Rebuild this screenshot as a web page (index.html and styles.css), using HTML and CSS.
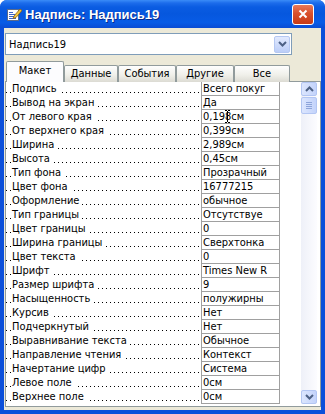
FILE: index.html
```html
<!DOCTYPE html>
<html lang="ru">
<head>
<meta charset="UTF-8">
<title>Надпись: Надпись19</title>
<link rel="stylesheet" href="styles.css">
</head>
<body>

<div class="window">
    <div class="titlebar">
        <svg class="app-icon" viewBox="0 0 16 16">
            <rect x="1.5" y="3.5" width="11" height="11" fill="#fff" stroke="#5A6B8C"/>
            <path d="M3 6.5h4M3 8.5h6M3 10.5h5M3 12.5h7" stroke="#3C64C8"/>
            <path d="M8 10l6-7 2 1.5-6 7-3 1z" fill="#F3C63F" stroke="#8A6010" stroke-width=".8"/>
        </svg>
        <span class="title">Надпись: Надпись19</span>
        <div class="close">
            <svg viewBox="0 0 10 10"><path d="M1.5 1.5l7 7M8.5 1.5l-7 7" stroke="#fff" stroke-width="2"/></svg>
        </div>
    </div>

    <div class="client">
        <div class="combo">
            <span class="combo-text">Надпись19</span>
            <span class="combo-btn">
                <svg viewBox="0 0 9 6"><polyline points="1,1 4.5,4.5 8,1" fill="none" stroke="#4D6185" stroke-width="2"/></svg>
            </span>
        </div>

        <div class="tabs">
            <div class="tab active">Макет</div>
            <div class="tab">Данные</div>
            <div class="tab">События</div>
            <div class="tab">Другие</div>
            <div class="tab">Все</div>
        </div>

        <div class="panel">
            <div class="grid">
                <div class="row"><div class="label"><span>Подпись</span></div><div class="value">Всего покуг</div></div>
                <div class="row"><div class="label"><span>Вывод на экран</span></div><div class="value">Да</div></div>
                <div class="row"><div class="label"><span>От левого края</span></div><div class="value">0,198см
                    <svg class="ibeam" viewBox="0 0 5 13"><path d="M0 .5h2M3 .5h2M2.5 1v11M0 12.5h2M3 12.5h2" stroke="#000"/></svg></div></div>
                <div class="row"><div class="label"><span>От верхнего края</span></div><div class="value">0,399см</div></div>
                <div class="row"><div class="label"><span>Ширина</span></div><div class="value">2,989см</div></div>
                <div class="row"><div class="label"><span>Высота</span></div><div class="value">0,45см</div></div>
                <div class="row"><div class="label"><span>Тип фона</span></div><div class="value">Прозрачный</div></div>
                <div class="row"><div class="label"><span>Цвет фона</span></div><div class="value">16777215</div></div>
                <div class="row"><div class="label"><span>Оформление</span></div><div class="value">обычное</div></div>
                <div class="row"><div class="label"><span>Тип границы</span></div><div class="value">Отсутствуе</div></div>
                <div class="row"><div class="label"><span>Цвет границы</span></div><div class="value">0</div></div>
                <div class="row"><div class="label"><span>Ширина границы</span></div><div class="value">Сверхтонка</div></div>
                <div class="row"><div class="label"><span>Цвет текста</span></div><div class="value">0</div></div>
                <div class="row"><div class="label"><span>Шрифт</span></div><div class="value">Times New R</div></div>
                <div class="row"><div class="label"><span>Размер шрифта</span></div><div class="value">9</div></div>
                <div class="row"><div class="label"><span>Насыщенность</span></div><div class="value">полужирны</div></div>
                <div class="row"><div class="label"><span>Курсив</span></div><div class="value">Нет</div></div>
                <div class="row"><div class="label"><span>Подчеркнутый</span></div><div class="value">Нет</div></div>
                <div class="row"><div class="label"><span>Выравнивание текста</span></div><div class="value">Обычное</div></div>
                <div class="row"><div class="label"><span>Направление чтения</span></div><div class="value">Контекст</div></div>
                <div class="row"><div class="label"><span>Начертание цифр</span></div><div class="value">Система</div></div>
                <div class="row"><div class="label"><span>Левое поле</span></div><div class="value">0см</div></div>
                <div class="row"><div class="label"><span>Верхнее поле</span></div><div class="value">0см</div></div>
            </div>

            <div class="scrollbar">
                <div class="sb-btn">
                    <svg viewBox="0 0 9 6"><polyline points="1,5 4.5,1.5 8,5" fill="none" stroke="#4D6185" stroke-width="2"/></svg>
                </div>
                <div class="sb-thumb"><span></span><span></span><span></span><span></span></div>
                <div class="sb-track"></div>
                <div class="sb-btn">
                    <svg viewBox="0 0 9 6"><polyline points="1,1 4.5,4.5 8,1" fill="none" stroke="#4D6185" stroke-width="2"/></svg>
                </div>
            </div>
        </div>
    </div>
</div>

</body>
</html>
```

FILE: styles.css
```css
/* --- Ventana --- */
body {
    margin:0;
    background:#fff;
    font-family: "DejaVu Sans Condensed", "DejaVu Sans", sans-serif;
    font-stretch: condensed;
    font-size:11px;
    color:#000;
}

.window {
    width:325px;
    height:414px;
    display:flex;
    flex-direction:column;
    background:#0B4FDA;
    border-radius:7px 7px 0 0;
    overflow:hidden;
}

/* --- Barra de titulo --- */
.titlebar {
    height:28px;
    flex:none;
    display:flex;
    align-items:center;
    background: linear-gradient(#3A8CF8 0, #1C6CEB 3px, #0A5CE2 7px, #0657DE 50%, #085CE6 80%, #0A4CD4 100%);
}

.app-icon { width:16px; height:16px; margin:0 3px 0 6px; }

.title {
    color:#fff;
    font: bold 13px "Liberation Sans", Arial, sans-serif;
    text-shadow: 1px 1px #0A2A8C;
}

.close {
    margin-left:auto;
    margin-right:11px;
    width:22px;
    height:21px;
    box-sizing:border-box;
    border:1px solid #fff;
    border-radius:3px;
    background: linear-gradient(#E8795A, #D9502C 45%, #C73A16);
    display:flex;
    align-items:center;
    justify-content:center;
}
.close svg { width:10px; height:10px; }

/* --- Area cliente --- */
.client {
    flex:1;
    margin:0 4px 4px;
    padding:5px 0 3px 1px;
    background:#ECE9D8;
    display:flex;
    flex-direction:column;
}

/* --- Combo --- */
.combo {
    width:287px;
    height:22px;
    box-sizing:border-box;
    border:1px solid #7F9DB9;
    background:#fff;
    display:flex;
    align-items:center;
    padding:0 1px 0 3px;
}
.combo-text { flex:1; }
.combo-btn {
    width:16px;
    height:17px;
    box-sizing:border-box;
    border:1px solid #B5C8F2;
    border-radius:2px;
    background: linear-gradient(#E2EAFE, #BCCEF8);
    display:flex;
    align-items:center;
    justify-content:center;
}
.combo-btn svg { width:9px; height:6px; }

/* --- Pestanas --- */
.tabs {
    display:flex;
    align-items:flex-end;
    height:21px;
    margin:6px 0 -1px 1px;
    position:relative;
    z-index:1;
}
.tab {
    height:17px;
    box-sizing:border-box;
    border:1px solid #919B9C;
    border-bottom:none;
    border-radius:2px 2px 0 0;
    background: linear-gradient(#FEFEFE, #F0F0EA 55%, #DCDBD3);
    text-align:center;
    line-height:15px;
}
.tab:nth-child(1) { width:58px; }
.tab:nth-child(2) { width:54px; }
.tab:nth-child(3) { width:58px; }
.tab:nth-child(4) { width:58px; }
.tab:nth-child(5) { width:56px; }
.tab.active {
    height:21px;
    background:#FCFCFE;
    line-height:17px;
}

/* --- Panel y rejilla --- */
.panel {
    height:326px;
    width:316px;
    box-sizing:border-box;
    border:1px solid #919B9C;
    background:#fff;
    display:flex;
}
.grid { flex:1; }

.row { display:flex; height:14px; }

.label {
    width:195px;
    flex:none;
    padding-left:6px;
    box-sizing:border-box;
    line-height:13px;
    white-space:nowrap;
    background-image: linear-gradient(90deg, #000 1px, transparent 1px);
    background-size:4px 1px;
    background-repeat:repeat-x;
    background-position:0 10px;
}
.label span { background:#fff; padding-right:3px; }

.value {
    width:79px;
    flex:none;
    box-sizing:border-box;
    border:1px solid #A0A0A0;
    border-top:none;
    padding-left:1px;
    line-height:13px;
    white-space:nowrap;
    overflow:hidden;
    position:relative;
}

.ibeam {
    position:absolute;
    left:23px;
    top:0;
    width:5px;
    height:13px;
}

/* --- Barra de desplazamiento --- */
.scrollbar {
    width:16px;
    height:322px;
    margin-right:3px;
    flex:none;
    display:flex;
    flex-direction:column;
    background: linear-gradient(90deg, #EEF0F8, #FCFCFF);
}
.sb-btn, .sb-thumb {
    box-sizing:border-box;
    border:1px solid #B3C6F3;
    border-radius:2px;
    background: linear-gradient(90deg, #DCE6FE, #C3D3FB);
}
.sb-btn {
    height:14px;
    display:flex;
    align-items:center;
    justify-content:center;
}
.sb-btn svg { width:9px; height:6px; }
.sb-thumb {
    height:17px;
    margin-top:1px;
    display:flex;
    flex-direction:column;
    align-items:center;
    justify-content:center;
    gap:1px;
}
.sb-thumb span { width:6px; height:1px; background:#8DA4DA; }
.sb-track { flex:1; }
```
